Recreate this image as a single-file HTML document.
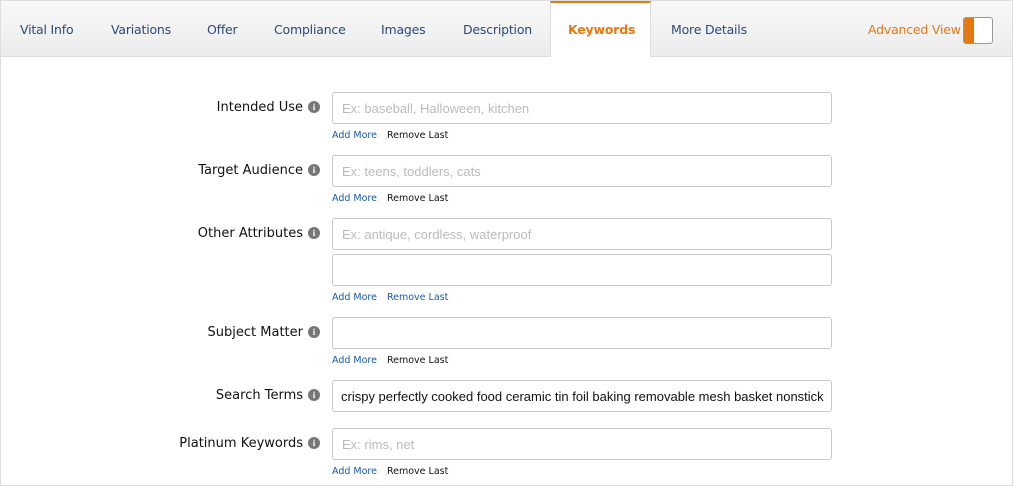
<html><head><style>
body{margin:0;background:#fff;font-family:"DejaVu Sans",Verdana,sans-serif;}
.wrap{position:absolute;left:0;top:0;width:1011px;height:484px;border:1px solid #ddd;}
.bar{position:absolute;left:0;top:0;width:1011px;height:55px;background:linear-gradient(#f8f8f8,#ececec);border-bottom:1px solid #ddd;}
.tab{position:absolute;top:21px;font-size:12.5px;color:#2a4a7a;letter-spacing:-0.2px}
.kw{position:absolute;left:549px;top:0;width:101px;height:56px;background:#fff;border-top:2px solid #e47911;border-left:1px solid #ddd;border-right:1px solid #ddd;box-sizing:border-box}
.lbl{position:absolute;right:709px;font-size:13px;color:#111;letter-spacing:0px}
.ic{position:absolute;left:307px;width:12px;height:12px;border-radius:6px;background:#777;color:#fff;font-size:9px;font-weight:bold;text-align:center;line-height:12px;font-family:"Liberation Serif",serif}
.in{position:absolute;left:331px;width:500px;height:32px;border:1px solid #c8c8c8;border-radius:3px;box-sizing:border-box;font-family:"Liberation Sans",Arial,sans-serif;font-size:13px;color:#bbb;padding:8px 9px;line-height:15px;white-space:nowrap}
.lk{position:absolute;left:331px;font-size:9.5px;color:#111}
.lk span{color:#1a5aa6;margin-right:10px}
</style></head><body><div class="wrap">
<div class="bar"></div>
<div class="kw"></div>
<div class="tab" style="left:19px">Vital Info</div>
<div class="tab" style="left:110px">Variations</div>
<div class="tab" style="left:206px">Offer</div>
<div class="tab" style="left:273px">Compliance</div>
<div class="tab" style="left:380px">Images</div>
<div class="tab" style="left:462px">Description</div>
<div class="tab" style="left:567px;color:#e47911;font-weight:bold">Keywords</div>
<div class="tab" style="left:670px">More Details</div>
<div class="tab" style="left:867px;color:#e47911">Advanced View</div>
<div style="position:absolute;left:962px;top:16px;width:30px;height:27px;border:1px solid #999;border-radius:3px;box-sizing:border-box;background:#fff;overflow:hidden"><div style="width:10px;height:100%;background:#e47911"></div></div>

<div class="lbl" style="top:99px">Intended Use</div><div class="ic" style="top:100px">i</div>
<div class="in" style="top:91px">Ex: baseball, Halloween, kitchen</div>
<div class="lk" style="top:129px"><span>Add More</span>Remove Last</div>

<div class="lbl" style="top:162px">Target Audience</div><div class="ic" style="top:163px">i</div>
<div class="in" style="top:154px">Ex: teens, toddlers, cats</div>
<div class="lk" style="top:192px"><span>Add More</span>Remove Last</div>

<div class="lbl" style="top:225px">Other Attributes</div><div class="ic" style="top:226px">i</div>
<div class="in" style="top:217px">Ex: antique, cordless, waterproof</div>
<div class="in" style="top:253px"></div>
<div class="lk" style="top:291px"><span>Add More</span><span>Remove Last</span></div>

<div class="lbl" style="top:324px">Subject Matter</div><div class="ic" style="top:325px">i</div>
<div class="in" style="top:316px"></div>
<div class="lk" style="top:354px"><span>Add More</span>Remove Last</div>

<div class="lbl" style="top:387px">Search Terms</div><div class="ic" style="top:388px">i</div>
<div class="in" style="top:379px;color:#111;padding-left:8px">crispy perfectly cooked food ceramic tin foil baking removable mesh basket nonstick</div>

<div class="lbl" style="top:435px">Platinum Keywords</div><div class="ic" style="top:436px">i</div>
<div class="in" style="top:427px">Ex: rims, net</div>
<div class="lk" style="top:465px"><span>Add More</span>Remove Last</div>
</div></body></html>
